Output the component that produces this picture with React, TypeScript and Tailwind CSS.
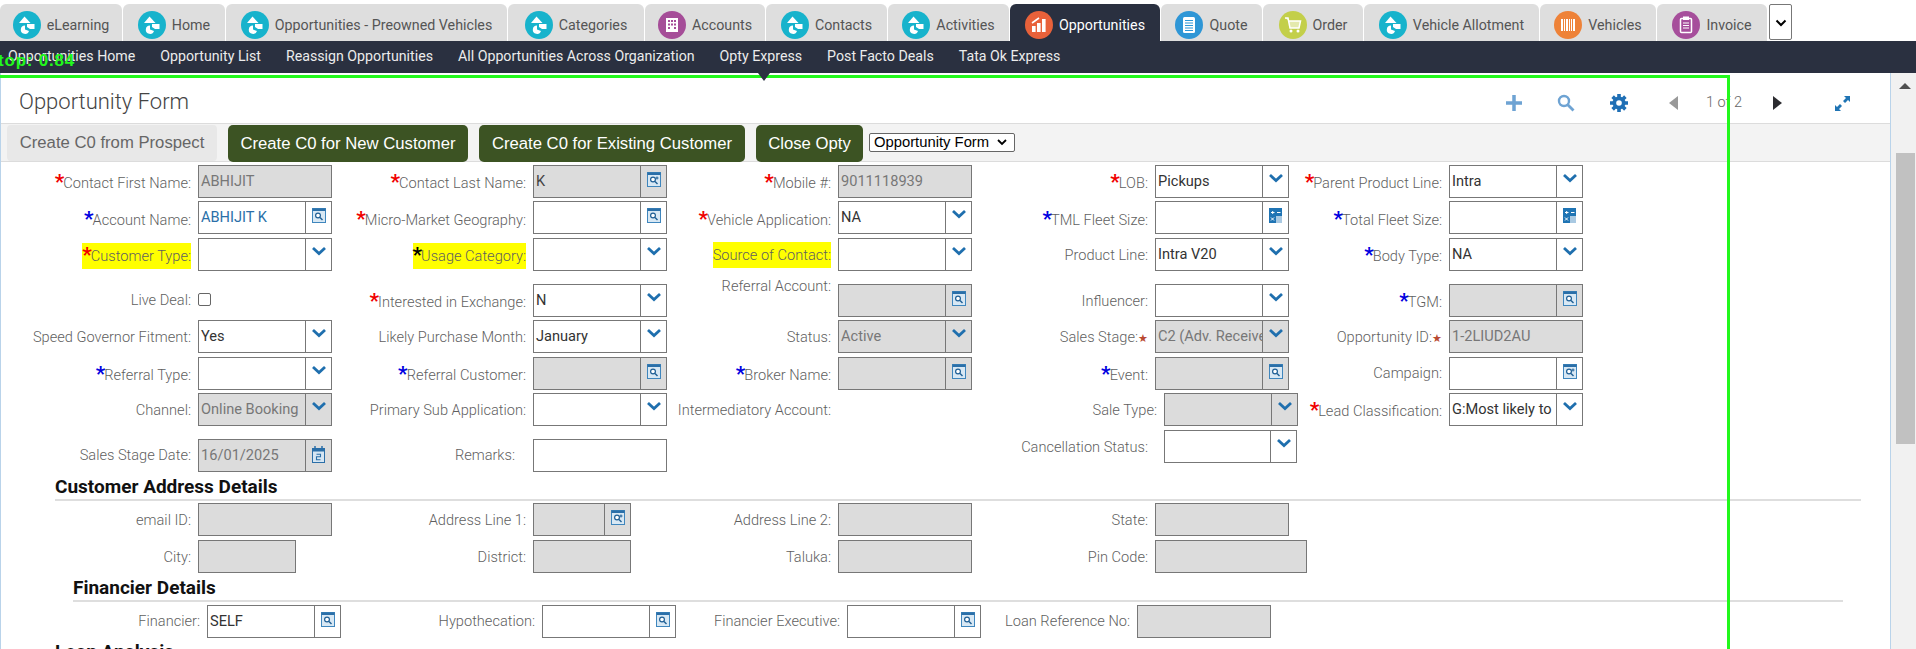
import React from "react";

const Chevron = () => (
  <svg width="16" height="10" viewBox="0 0 16 10" fill="none" className="mt-[1px]"><path d="M2 2l6 5.5L14 2" stroke="#1f6fae" strokeWidth="2.8" /></svg>
);
const Lookup = ({ plus }: { plus?: boolean }) => (
  <svg width="14" height="15" viewBox="0 0 14 15" fill="none">
    <rect x="0.5" y="0.5" width="13" height="14" fill="#d8e8f4" stroke="#3f86bd" />
    <rect x="0.5" y="0.5" width="13" height="2.5" fill="#2b6fa8" />
    <circle cx="6" cy="7.5" r="2.4" stroke="#1f5f95" strokeWidth="1.2" fill="#fff" />
    <path d="M8 9.5l2.5 2.5" stroke="#1f5f95" strokeWidth="1.4" />
    {plus && <path d="M10 4.5v3M8.5 6h3" stroke="#1f5f95" strokeWidth="1" />}
  </svg>
);
const Calc = () => (
  <svg width="13" height="15" viewBox="0 0 13 15">
    <rect width="13" height="15" fill="#1f74b4" />
    <rect x="7" y="8" width="6" height="7" fill="#a9c9e2" />
    <path d="M2 4.5h3.5M3.7 3v3M8 4.5h3.5M2 9.5l3 3M5 9.5l-3 3" stroke="#fff" strokeWidth="1" />
  </svg>
);
const Cal = () => (
  <svg width="13" height="17" viewBox="0 0 13 17">
    <rect x="0.5" y="2.5" width="12" height="14" fill="#d6e6f3" stroke="#2b6fa8" />
    <rect x="0.5" y="2.5" width="12" height="3" fill="#2b6fa8" />
    <path d="M3 0v3M10 0v3" stroke="#2b6fa8" strokeWidth="1.5" />
    <path d="M4.5 8.2h4v2.600h-4v3h4" stroke="#2b6fa8" strokeWidth="1.1" fill="none" />
  </svg>
);

type Kind = "select" | "lookup" | "lookupPlus" | "calc" | "date" | "text" | "check" | "none";

function Control({ kind, value, off, tone, w = "w-[134px]", divider = "w-[26px]" }: { kind: Kind; value?: string; off?: boolean; tone?: string; w?: string; divider?: string }) {
  if (kind === "none") return null;
  if (kind === "check")
    return <div className="pt-[9px]"><div className="h-[13px] w-[13px] rounded-[2px] border border-[#666] bg-white" /></div>;
  const icon =
    kind === "select" ? <Chevron /> : kind === "lookup" ? <Lookup /> : kind === "lookupPlus" ? <Lookup plus /> : kind === "calc" ? <Calc /> : kind === "date" ? <Cal /> : null;
  const color = tone ?? (off ? "text-[#777]" : "text-[#333]");
  return (
    <div className={`flex h-[33px] shrink-0 border border-[#777] ${w} ${off ? "bg-[#dcdcdc]" : "bg-white"}`}>
      <div className={`min-w-0 flex-1 overflow-hidden whitespace-nowrap pl-[2px] pt-[5px] text-[14.6px] leading-[20px] ${color}`}>{value}</div>
      {icon && <div className={`flex shrink-0 items-start justify-center border-l border-[#777] pt-[6px] ${divider}`}>{icon}</div>}
    </div>
  );
}

const Star = ({ c }: { c: string }) => <span className={`mr-[-1px] align-[-1px] text-[21px] font-bold leading-[0] ${c}`}>*</span>;
const red = "text-[#f00000]";
const blue = "text-[#0000e0]";
const black = "text-black";

function Field({ cell, lw, label, star, hi, trail, pad, cls = "", ...c }: {
  cell: string; lw: string; label: string; star?: string; hi?: boolean; trail?: boolean; pad?: string; cls?: string;
  kind: Kind; value?: string; off?: boolean; tone?: string; w?: string; divider?: string;
}) {
  const p = pad ?? (star ? "pt-[8px]" : "pt-[7px]");
  return (
    <div className={`flex shrink-0 ${cell} ${cls}`}>
      <div className={`mr-[7px] shrink-0 whitespace-nowrap text-right text-[14.6px] font-light leading-[20px] text-[#5f5f5f] ${lw} ${p}`}>
        {star && !hi && <Star c={star} />}
        {hi ? (
          <span className="bg-[#ffff00] py-[4px]">
            {star && <Star c={star} />}
            {label}
          </span>
        ) : (
          label
        )}
        {trail && <span className="text-[11px] text-[#b94a32]">★</span>}
      </div>
      <Control {...c} />
    </div>
  );
}

const C1 = { cell: "w-[331px]", lw: "w-[190px]" };
const C2 = { cell: "w-[335px]", lw: "w-[194px]" };
const C3 = { cell: "w-[304px]", lw: "w-[164px]" };
const C4 = { cell: "w-[318px]", lw: "w-[177px]" };
const C5 = { cell: "w-[294px]", lw: "w-[153px]" };

const Row = ({ mt, children }: { mt: string; children: React.ReactNode }) => <div className={`flex h-[33px] ${mt}`}>{children}</div>;

function Arrows() {
  return (
    <g fill="#fff">
      <path d="M11.500 5.500L17.500 12H6z" />
      <path d="M14 13h7.500v5h-4.500l-3-2z" />
      <path d="M12 14.500a4.200 4.200 0 1 0 4 5.500l-4-1.500z" />
    </g>
  );
}
const glyphs: Record<string, React.ReactNode> = {
  teal: <Arrows />,
  account: (
    <g fill="#fff">
      <path d="M8 7h12v14H8z" />
      <path d="M10 9h2v2h-2zM13 9h2v2h-2zM16 9h2v2h-2zM10 12.500h2v2h-2zM13 12.500h2v2h-2zM16 12.500h2v2h-2zM10 16h2v2h-2zM16 16h2v2h-2z" fill="#a54d98" />
    </g>
  ),
  opp: (
    <g fill="#fff">
      <path d="M7 15h3.600v6H7zM12 12h3.600v9H12zM17 8h3.600v13H17z" />
      <path d="M7 12l7-5" stroke="#fff" strokeWidth="1.600" />
    </g>
  ),
  quote: (
    <g>
      <rect x="8" y="6" width="12" height="16" rx="1.500" fill="#fff" />
      <path d="M10 9.500h8M10 12h8M10 14.500h8M10 17h8M10 19.500h8" stroke="#2e96d6" strokeWidth="1" />
    </g>
  ),
  order: (
    <g>
      <path d="M6 7h3l2 10h9l1.500-7H10" stroke="#fff" strokeWidth="1.500" fill="#fff" fillOpacity=".55" />
      <circle cx="12" cy="20" r="1.500" fill="#fff" />
      <circle cx="19" cy="20" r="1.500" fill="#fff" />
    </g>
  ),
  barcode: (
    <g fill="#fff">
      <path d="M7 8h2v12H7zM10 8h1v12h-1zM12 8h2v12h-2zM15 8h1v12h-1zM17 8h1v12h-1zM19 8h2v12h-2z" />
    </g>
  ),
  invoice: (
    <g>
      <rect x="8.500" y="7.500" width="11" height="14" rx="1" fill="none" stroke="#fff" strokeWidth="1.500" />
      <rect x="11" y="5.500" width="6" height="3.500" fill="#fff" />
      <path d="M11 12h6M11 14.500h6M11 17h6" stroke="#fff" strokeWidth="1.200" />
    </g>
  ),
};

function Tab({ w, label, bg, glyph, active }: { w: string; label: string; bg: string; glyph: string; active?: boolean }) {
  return (
    <div className={`flex h-[37px] shrink-0 items-start justify-center gap-[6px] rounded-t-[6px] pt-[7px] ${w} ${active ? "bg-[#2a3040] text-white" : "bg-[#dedede] text-[#555]"}`}>
      <svg width="28" height="28" viewBox="0 0 28 28" className="shrink-0">
        <circle cx="14" cy="14" r="14" fill={bg} />
        {glyphs[glyph]}
      </svg>
      <span className="whitespace-nowrap pt-[4px] text-[14.250px] leading-[20px]">{label}</span>
    </div>
  );
}

const Btn = ({ w, children }: { w: string; children: React.ReactNode }) => (
  <div className={`flex h-[37px] shrink-0 items-center justify-center whitespace-nowrap rounded-[5px] bg-[#3c5323] text-[16.700px] text-white ${w}`}>{children}</div>
);

export default function App() {
  return (
    <div className="relative h-[649px] w-[1916px] overflow-hidden bg-white font-['Roboto',sans-serif]">
      <div className="flex h-[41px] gap-[1px] pt-[4px]">
        <Tab w="w-[122px]" label="eLearning" bg="#17b3cc" glyph="teal" />
        <Tab w="w-[102px]" label="Home" bg="#17b3cc" glyph="teal" />
        <Tab w="w-[281px]" label="Opportunities - Preowned Vehicles" bg="#17b3cc" glyph="teal" />
        <Tab w="w-[136px]" label="Categories" bg="#17b3cc" glyph="teal" />
        <Tab w="w-[120px]" label="Accounts" bg="#a54d98" glyph="account" />
        <Tab w="w-[121px]" label="Contacts" bg="#17b3cc" glyph="teal" />
        <Tab w="w-[121px]" label="Activities" bg="#17b3cc" glyph="teal" />
        <Tab w="w-[150px]" label="Opportunities" bg="#e8613a" glyph="opp" active />
        <Tab w="w-[101px]" label="Quote" bg="#2e96d6" glyph="quote" />
        <Tab w="w-[100px]" label="Order" bg="#c3cf4a" glyph="order" />
        <Tab w="w-[175px]" label="Vehicle Allotment" bg="#17b3cc" glyph="teal" />
        <Tab w="w-[116px]" label="Vehicles" bg="#ee8238" glyph="barcode" />
        <Tab w="w-[110px]" label="Invoice" bg="#a64e9b" glyph="invoice" />
        <div className="ml-[1px] flex h-[36px] w-[23px] shrink-0 items-start justify-center rounded-[2px] border border-[#777] bg-white pt-[14px]">
          <svg width="12" height="8" viewBox="0 0 12 8" fill="none"><path d="M1.500 1.500L6 6l4.500-4.500" stroke="#000" strokeWidth="2" /></svg>
        </div>
      </div>

      <div className="flex h-[32px] items-center gap-[25px] bg-[#2a3040] pl-[8px] text-[14.200px] text-[#ececec]">
        {["Opportunities Home", "Opportunity List", "Reassign Opportunities", "All Opportunities Across Organization", "Opty Express", "Post Facto Deals", "Tata Ok Express"].map((t) => (
          <span key={t} className="whitespace-nowrap">{t}</span>
        ))}
      </div>

      <div className="flex h-[576px]">
        <div className="w-[1891px] shrink-0 overflow-hidden border-x border-[#b9d3ea] pt-[3px]">
          <div className="flex h-[48px] items-center border-b border-[#dcdcdc] pl-[18px]">
            <h1 className="flex-1 pt-[4px] text-[22px] font-light leading-[28px] text-[#444]">Opportunity Form</h1>
            <div className="flex items-center pt-[7px]">
              <svg width="18" height="18" viewBox="0 0 18 18" className="mr-[34px]"><path d="M9 1v16M1 9h16" stroke="#6ea3d3" strokeWidth="3.500" /></svg>
              <svg width="18" height="18" viewBox="0 0 18 18" fill="none" className="mr-[35px]"><circle cx="7" cy="7" r="5" stroke="#6ea3d3" strokeWidth="2.400" /><path d="M10.500 10.500L16.500 16.500" stroke="#6ea3d3" strokeWidth="2.800" /></svg>
              <svg width="18" height="18" viewBox="0 0 18 18" className="mr-[41px]">
                <g fill="#1f6fb5">
                  <circle cx="9" cy="9" r="6.500" />
                  <path d="M7.200 0h3.600v4H7.200zM7.200 14h3.600v4H7.200zM0 7.200h4v3.600H0zM14 7.200h4v3.600h-4z" />
                  <path d="M7.200 0h3.600v4H7.200zM7.200 14h3.600v4H7.200zM0 7.200h4v3.600H0zM14 7.200h4v3.600h-4z" transform="rotate(45 9 9)" />
                </g>
                <circle cx="9" cy="9" r="2.800" fill="#fff" />
              </svg>
              <svg width="9" height="14" viewBox="0 0 9 14" className="mr-[28px]"><path d="M9 0v14L0 7z" fill="#999" /></svg>
              <span className="mr-[31px] text-[14.500px] font-light text-[#666]">1 of 2</span>
              <svg width="9" height="14" viewBox="0 0 9 14" className="mr-[52px]"><path d="M0 0v14l9-7z" fill="#2c2c30" /></svg>
              <svg width="17" height="17" viewBox="0 0 17 17" className="mr-[39px]" fill="#1f74b4">
                <path d="M10 1h6v6l-2-2-3 3-2-2 3-3zM7 16H1v-6l2 2 3-3 2 2-3 3z" />
              </svg>
            </div>
          </div>

          <div className="flex h-[38px] items-start gap-[11px] border-b border-[#dcdcdc] bg-[#f3f3f3] pl-[6px] pt-[1px] font-['Liberation_Sans',sans-serif]">
            <div className="flex h-[36px] w-[210px] shrink-0 items-center justify-center whitespace-nowrap rounded-[4px] bg-[#e8e8e8] text-[16.700px] text-[#666]">Create C0 from Prospect</div>
            <Btn w="w-[240px]">Create C0 for New Customer</Btn>
            <Btn w="w-[266px]">Create C0 for Existing Customer</Btn>
            <Btn w="w-[107px]">Close Opty</Btn>
            <div className="-ml-[5px] mt-[8px] flex h-[19px] w-[146px] shrink-0 items-center gap-[8px] rounded-[2px] border border-[#666] bg-white pl-[4px] text-[14.800px] text-black">
              <span className="whitespace-nowrap">Opportunity Form</span>
              <svg width="10" height="7" viewBox="0 0 10 7" fill="none"><path d="M1 1l4 4 4-4" stroke="#000" strokeWidth="1.800" /></svg>
            </div>
          </div>

          <Row mt="mt-[3px]">
            <Field {...C1} label="Contact First Name:" star={red} kind="text" value="ABHIJIT" off />
            <Field {...C2} label="Contact Last Name:" star={red} kind="lookupPlus" value="K" off tone="text-[#444]" />
            <Field {...C3} label="Mobile #:" star={red} kind="text" value="9011118939" off />
            <Field {...C4} label="LOB:" star={red} kind="select" value="Pickups" />
            <Field {...C5} label="Parent Product Line:" star={red} kind="select" value="Intra" />
          </Row>
          <Row mt="mt-[3px]">
            <Field {...C1} label="Account Name:" star={blue} pad="pt-[9px]" kind="lookup" value="ABHIJIT K" tone="text-[#2a6fa8]" />
            <Field {...C2} label="Micro-Market Geography:" star={red} pad="pt-[9px]" kind="lookup" />
            <Field {...C3} label="Vehicle Application:" star={red} pad="pt-[9px]" kind="select" value="NA" />
            <Field {...C4} label="TML Fleet Size:" star={blue} pad="pt-[9px]" kind="calc" />
            <Field {...C5} label="Total Fleet Size:" star={blue} pad="pt-[9px]" kind="calc" />
          </Row>
          <Row mt="mt-[4px]">
            <Field {...C1} label="Customer Type:" star={red} hi kind="select" />
            <Field {...C2} label="Usage Category:" star={black} hi kind="select" />
            <Field {...C3} label="Source of Contact:" hi kind="select" />
            <Field {...C4} label="Product Line:" kind="select" value="Intra V20" />
            <Field {...C5} label="Body Type:" star={blue} kind="select" value="NA" />
          </Row>
          <Row mt="mt-[13px]">
            <Field {...C1} label="Live Deal:" pad="pt-[6px]" kind="check" />
            <Field {...C2} label="Interested in Exchange:" star={red} kind="select" value="N" />
            <Field {...C3} label="Referral Account:" pad="-mt-[8px]" kind="lookup" off />
            <Field {...C4} label="Influencer:" kind="select" />
            <Field {...C5} label="TGM:" star={blue} kind="lookup" off />
          </Row>
          <Row mt="mt-[3px]">
            <Field {...C1} label="Speed Governor Fitment:" kind="select" value="Yes" />
            <Field {...C2} label="Likely Purchase Month:" kind="select" value="January" />
            <Field {...C3} label="Status:" kind="select" value="Active" off />
            <Field {...C4} label="Sales Stage:" trail kind="select" value="C2 (Adv. Receive" off />
            <Field {...C5} label="Opportunity ID:" trail kind="text" value="1-2LIUD2AU" off />
          </Row>
          <Row mt="mt-[4px]">
            <Field {...C1} label="Referral Type:" star={blue} kind="select" />
            <Field {...C2} label="Referral Customer:" star={blue} kind="lookup" off />
            <Field {...C3} label="Broker Name:" star={blue} kind="lookup" off />
            <Field {...C4} label="Event:" star={blue} kind="lookup" off />
            <Field {...C5} label="Campaign:" pad="pt-[6px]" kind="lookupPlus" />
          </Row>
          <Row mt="mt-[3px]">
            <Field {...C1} label="Channel:" kind="select" value="Online Booking" off />
            <Field {...C2} label="Primary Sub Application:" kind="select" />
            <Field {...C3} label="Intermediatory Account:" kind="none" />
            <Field cell="w-[318px]" lw="w-[186px]" label="Sale Type:" kind="select" off />
            <Field {...C5} label="Lead Classification:" star={red} kind="select" value="G:Most likely to" />
          </Row>
          <Row mt="mt-[13px]">
            <Field {...C1} label="Sales Stage Date:" pad="pt-[6px]" kind="date" value="16/01/2025" off />
            <div className="flex w-[335px] shrink-0">
              <div className="mr-[18px] w-[183px] shrink-0 pt-[6px] text-right text-[14.600px] font-light leading-[20px] text-[#5f5f5f]">Remarks:</div>
              <Control kind="text" />
            </div>
            <div className="w-[304px] shrink-0" />
            <div className="-mt-[9px] flex h-[33px] shrink-0">
              <div className="mr-[16px] w-[177px] shrink-0 whitespace-nowrap pt-[7px] text-right text-[14.600px] font-light leading-[20px] text-[#5f5f5f]">Cancellation Status:</div>
              <Control kind="select" w="w-[133px]" />
            </div>
          </Row>

          <div className="ml-[54px] mr-[29px] flex h-[29px] items-end border-b-2 border-[#dedede]">
            <h2 className="text-[19px] font-bold leading-[24px] text-[#111]">Customer Address Details</h2>
          </div>
          <Row mt="mt-[2px]">
            <Field {...C1} label="email ID:" kind="text" off />
            <Field {...C2} label="Address Line 1:" kind="lookupPlus" off w="w-[98px]" />
            <Field {...C3} label="Address Line 2:" kind="text" off />
            <Field {...C4} label="State:" kind="text" off />
          </Row>
          <Row mt="mt-[4px]">
            <Field {...C1} label="City:" kind="text" off w="w-[98px]" />
            <Field {...C2} label="District:" kind="text" off w="w-[98px]" />
            <Field {...C3} label="Taluka:" kind="text" off />
            <Field {...C4} label="Pin Code:" kind="text" off w="w-[152px]" />
          </Row>

          <div className="ml-[72px] mr-[47px] flex h-[29px] items-end border-b-2 border-[#dedede]">
            <h2 className="text-[19px] font-bold leading-[24px] text-[#111]">Financier Details</h2>
          </div>
          <Row mt="mt-[3px]">
            <Field cell="w-[340px]" lw="w-[199px]" pad="pt-[6px]" label="Financier:" kind="lookup" value="SELF" />
            <Field {...C2} pad="pt-[6px]" label="Hypothecation:" kind="lookup" />
            <Field cell="w-[304px]" lw="w-[164px]" pad="pt-[6px]" label="Financier Executive:" kind="lookup" />
            <Field cell="w-[300px]" lw="w-[150px]" pad="pt-[6px]" label="Loan Reference No:" kind="text" off />
          </Row>
          <div className="ml-[54px] mt-[2px]">
            <h2 className="text-[19px] font-bold leading-[24px] text-[#111]">Loan Analysis</h2>
          </div>
        </div>

        <div className="flex w-[25px] shrink-0 flex-col items-center bg-[#f1f1f1] pl-[3px]">
          <svg width="12" height="6" viewBox="0 0 12 6" className="mt-[10px]"><path d="M0 6l6-6 6 6z" fill="#505050" /></svg>
          <div className="mt-[64px] h-[291px] w-[19px] bg-[#c1c1c1]" />
        </div>
      </div>

      <div className="absolute left-[-4px] top-[75px] h-[640px] w-[1734px] border-r-[3px] border-t-[3px] border-[#22f81c]" />
      <div className="absolute left-[-2px] top-[51px] whitespace-nowrap font-['Liberation_Sans',sans-serif] text-[17px] font-bold leading-[20px] tracking-[0.8px] text-[#22f81c]">top: 0.84</div>
      <svg width="12" height="8" viewBox="0 0 12 8" className="absolute left-[758px] top-[73px]"><path d="M0 0h12L6 8z" fill="#2a3040" /></svg>
    </div>
  );
}
